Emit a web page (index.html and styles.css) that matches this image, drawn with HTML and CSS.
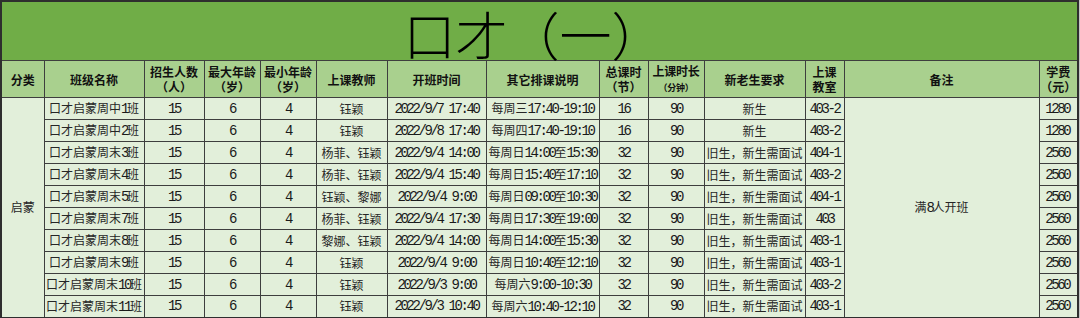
FILE: index.html
```html
<!DOCTYPE html>
<html lang="zh-CN">
<head>
<meta charset="utf-8">
<title>口才（一）</title>
<link rel="stylesheet" href="styles.css">
</head>
<body>
<table class="sheet">
  <colgroup>
    <col class="c-a"><col class="c-b"><col class="c-c"><col class="c-d"><col class="c-e"><col class="c-f"><col class="c-g">
    <col class="c-h"><col class="c-i"><col class="c-j"><col class="c-k"><col class="c-l"><col class="c-m"><col class="c-n">
  </colgroup>
  <tr class="title-row"><td colspan="14" class="title">口才（一）</td></tr>
  <tr class="head-row">
    <th>分类</th>
    <th>班级名称</th>
    <th>招生人数<br>（人）</th>
    <th>最大年龄<br>（岁）</th>
    <th>最小年龄<br>（岁）</th>
    <th>上课教师</th>
    <th>开班时间</th>
    <th>其它排课说明</th>
    <th>总课时<br>（节）</th>
    <th class="tight">上课时长<br><span class="small">（分钟）</span></th>
    <th>新老生要求</th>
    <th>上课<br>教室</th>
    <th>备注</th>
    <th>学费<br>（元）</th>
  </tr>
  <tr>
    <td rowspan="10" class="cat">启蒙</td>
    <td>口才启蒙周中<span class="n">1</span>班</td><td class="n">15</td><td class="n">6</td><td class="n">4</td>
    <td>钰颖</td><td class="n">2022/9/7 17:40</td><td>每周三<span class="n">17:40-19:10</span></td>
    <td class="n">16</td><td class="n">90</td><td>新生</td><td class="n">403-2</td>
    <td rowspan="10" class="note">满<span class="n">8</span>人开班</td>
    <td class="n fee">1280</td>
  </tr>
  <tr>
    <td>口才启蒙周中<span class="n">2</span>班</td><td class="n">15</td><td class="n">6</td><td class="n">4</td>
    <td>钰颖</td><td class="n">2022/9/8 17:40</td><td>每周四<span class="n">17:40-19:10</span></td>
    <td class="n">16</td><td class="n">90</td><td>新生</td><td class="n">403-2</td>
    <td class="n fee">1280</td>
  </tr>
  <tr>
    <td>口才启蒙周末<span class="n">3</span>班</td><td class="n">15</td><td class="n">6</td><td class="n">4</td>
    <td>杨菲、钰颖</td><td class="n">2022/9/4 14:00</td><td>每周日<span class="n">14:00</span>至<span class="n">15:30</span></td>
    <td class="n">32</td><td class="n">90</td><td>旧生，新生需面试</td><td class="n">404-1</td>
    <td class="n fee">2560</td>
  </tr>
  <tr>
    <td>口才启蒙周末<span class="n">4</span>班</td><td class="n">15</td><td class="n">6</td><td class="n">4</td>
    <td>杨菲、钰颖</td><td class="n">2022/9/4 15:40</td><td>每周日<span class="n">15:40</span>至<span class="n">17:10</span></td>
    <td class="n">32</td><td class="n">90</td><td>旧生，新生需面试</td><td class="n">403-2</td>
    <td class="n fee">2560</td>
  </tr>
  <tr>
    <td>口才启蒙周末<span class="n">5</span>班</td><td class="n">15</td><td class="n">6</td><td class="n">4</td>
    <td>钰颖、黎娜</td><td class="n">2022/9/4 9:00</td><td>每周日<span class="n">09:00</span>至<span class="n">10:30</span></td>
    <td class="n">32</td><td class="n">90</td><td>旧生，新生需面试</td><td class="n">404-1</td>
    <td class="n fee">2560</td>
  </tr>
  <tr>
    <td>口才启蒙周末<span class="n">7</span>班</td><td class="n">15</td><td class="n">6</td><td class="n">4</td>
    <td>杨菲、钰颖</td><td class="n">2022/9/4 17:30</td><td>每周日<span class="n">17:30</span>至<span class="n">19:00</span></td>
    <td class="n">32</td><td class="n">90</td><td>旧生，新生需面试</td><td class="n">403</td>
    <td class="n fee">2560</td>
  </tr>
  <tr>
    <td>口才启蒙周末<span class="n">8</span>班</td><td class="n">15</td><td class="n">6</td><td class="n">4</td>
    <td>黎娜、钰颖</td><td class="n">2022/9/4 14:00</td><td>每周日<span class="n">14:00</span>至<span class="n">15:30</span></td>
    <td class="n">32</td><td class="n">90</td><td>旧生，新生需面试</td><td class="n">403-1</td>
    <td class="n fee">2560</td>
  </tr>
  <tr>
    <td>口才启蒙周末<span class="n">9</span>班</td><td class="n">15</td><td class="n">6</td><td class="n">4</td>
    <td>钰颖</td><td class="n">2022/9/4 9:00</td><td>每周日<span class="n">10:40</span>至<span class="n">12:10</span></td>
    <td class="n">32</td><td class="n">90</td><td>旧生，新生需面试</td><td class="n">403-1</td>
    <td class="n fee">2560</td>
  </tr>
  <tr>
    <td>口才启蒙周末<span class="n">10</span>班</td><td class="n">15</td><td class="n">6</td><td class="n">4</td>
    <td>钰颖</td><td class="n">2022/9/3 9:00</td><td>每周六<span class="n">9:00-10:30</span></td>
    <td class="n">32</td><td class="n">90</td><td>旧生，新生需面试</td><td class="n">403-2</td>
    <td class="n fee">2560</td>
  </tr>
  <tr>
    <td>口才启蒙周末<span class="n">11</span>班</td><td class="n">15</td><td class="n">6</td><td class="n">4</td>
    <td>钰颖</td><td class="n">2022/9/3 10:40</td><td>每周六<span class="n">10:40-12:10</span></td>
    <td class="n">32</td><td class="n">90</td><td>旧生，新生需面试</td><td class="n">403-1</td>
    <td class="n fee">2560</td>
  </tr>
</table>
</body>
</html>
```
FILE: styles.css
```css
html, body {
  margin: 0;
  padding: 0;
  background: #c4c4c4;
}

.sheet {
  width: 1078px;
  border-collapse: collapse;
  table-layout: fixed;
  font-family: "Noto Sans CJK SC", sans-serif;
  color: #262626;
  border: 2px solid #2e2e2e;
}

.c-a { width: 43px; }
.c-b { width: 100px; }
.c-c { width: 60px; }
.c-d { width: 56px; }
.c-e { width: 56px; }
.c-f { width: 71px; }
.c-g { width: 99px; }
.c-h { width: 113px; }
.c-i { width: 49px; }
.c-j { width: 56px; }
.c-k { width: 101px; }
.c-l { width: 39px; }
.c-m { width: 195px; }
.c-n { width: 39px; }

.sheet td,
.sheet th {
  border: 1px solid #3e3e3e;
  padding: 0;
  text-align: center;
  vertical-align: middle;
  white-space: nowrap;
  overflow: hidden;
}

.title-row { height: 59px; }

.sheet .title {
  background: #70ad47;
  color: #000;
  font-size: 52px;
  font-weight: 300;
  line-height: 52px;
  vertical-align: top;
  padding: 6px 12px 0 0;
  overflow: visible;
}

.head-row { height: 37px; }

.sheet th {
  background: #a9d08e;
  color: #111;
  font-size: 12px;
  line-height: 15px;
  font-weight: 700;
}

.sheet th.tight {
  letter-spacing: -0.3px;
}

.sheet th .small {
  font-size: 9px;
}

.sheet tr:not(.title-row):not(.head-row) { height: 22px; }

.sheet td {
  background: #e2efda;
  font-size: 12px;
  line-height: 14px;
}

.sheet .n {
  font-family: "Liberation Mono", monospace;
  font-size: 14px;
  letter-spacing: -2.4px;
  color: #1a1a1a;
}

.sheet td.fee {
  text-align: right;
  padding-right: 8px;
}
```
